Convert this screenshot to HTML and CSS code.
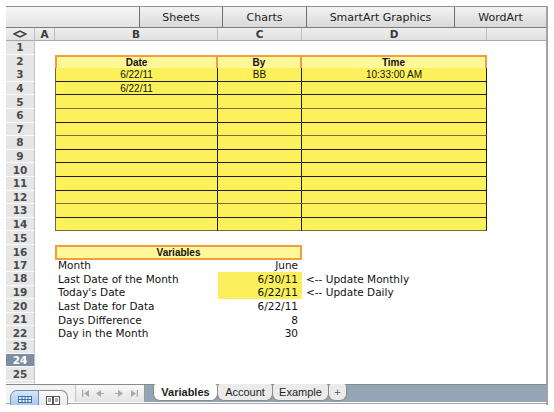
FILE: index.html
```html
<!DOCTYPE html>
<html lang="en">
<head>
    <meta charset="UTF-8">
    <title>Workbook - Variables</title>
    <link rel="stylesheet" href="styles.css">
</head>
<body>
    <div class="window">
        <div class="toolbar">
            <div class="tb-blank"></div>
            <div class="tb-btn sheets">Sheets</div>
            <div class="tb-btn charts">Charts</div>
            <div class="tb-btn smartart">SmartArt Graphics</div>
            <div class="tb-btn wordart">WordArt</div>
        </div>

        <div class="sheet">
            <div class="row colhead">
                <div class="corner">
                    <svg width="14" height="8" viewBox="0 0 14 8"><polygon points="1,4 7,1 13,4 7,7" fill="none" stroke="#3c3c3c" stroke-width="1.5"/></svg>
                </div>
                <div>A</div><div>B</div><div>C</div><div>D</div><div></div>
            </div>

            <div class="row"><div class="rh">1</div><div></div><div></div><div></div><div></div><div></div></div>
            <div class="row"><div class="rh">2</div><div></div><div class="hd first">Date</div><div class="hd">By</div><div class="hd">Time</div><div></div></div>
            <div class="row"><div class="rh">3</div><div></div><div class="y first">6/22/11</div><div class="y">BB</div><div class="y">10:33:00 AM</div><div></div></div>
            <div class="row"><div class="rh">4</div><div></div><div class="y first">6/22/11</div><div class="y"></div><div class="y"></div><div></div></div>
            <div class="row"><div class="rh">5</div><div></div><div class="y first olive"></div><div class="y olive"></div><div class="y olive"></div><div></div></div>
            <div class="row"><div class="rh">6</div><div></div><div class="y first"></div><div class="y"></div><div class="y"></div><div></div></div>
            <div class="row"><div class="rh">7</div><div></div><div class="y first olive"></div><div class="y olive"></div><div class="y olive"></div><div></div></div>
            <div class="row"><div class="rh">8</div><div></div><div class="y first"></div><div class="y"></div><div class="y"></div><div></div></div>
            <div class="row"><div class="rh">9</div><div></div><div class="y first"></div><div class="y"></div><div class="y"></div><div></div></div>
            <div class="row"><div class="rh">10</div><div></div><div class="y first"></div><div class="y"></div><div class="y"></div><div></div></div>
            <div class="row"><div class="rh">11</div><div></div><div class="y first"></div><div class="y"></div><div class="y"></div><div></div></div>
            <div class="row"><div class="rh">12</div><div></div><div class="y first olive"></div><div class="y olive"></div><div class="y olive"></div><div></div></div>
            <div class="row"><div class="rh">13</div><div></div><div class="y first"></div><div class="y"></div><div class="y"></div><div></div></div>
            <div class="row"><div class="rh">14</div><div></div><div class="y first olive"></div><div class="y olive"></div><div class="y olive"></div><div></div></div>
            <div class="row"><div class="rh">15</div><div></div><div></div><div></div><div></div><div></div></div>
            <div class="row"><div class="rh">16</div><div></div><div class="vh">Variables</div><div></div><div></div></div>
            <div class="row"><div class="rh">17</div><div></div><div class="lbl">Month</div><div class="val">June</div><div></div><div></div></div>
            <div class="row"><div class="rh">18</div><div></div><div class="lbl">Last Date of the Month</div><div class="val hl">6/30/11</div><div class="note">&lt;-- Update Monthly</div><div></div></div>
            <div class="row"><div class="rh">19</div><div></div><div class="lbl">Today's Date</div><div class="val hl">6/22/11</div><div class="note">&lt;-- Update Daily</div><div></div></div>
            <div class="row"><div class="rh">20</div><div></div><div class="lbl">Last Date for Data</div><div class="val">6/22/11</div><div></div><div></div></div>
            <div class="row"><div class="rh">21</div><div></div><div class="lbl">Days Difference</div><div class="val">8</div><div></div><div></div></div>
            <div class="row"><div class="rh">22</div><div></div><div class="lbl">Day in the Month</div><div class="val">30</div><div></div><div></div></div>
            <div class="row"><div class="rh">23</div><div></div><div></div><div></div><div></div><div></div></div>
            <div class="row"><div class="rh sel">24</div><div></div><div></div><div></div><div></div><div></div></div>
            <div class="row"><div class="rh">25</div><div></div><div></div><div></div><div></div><div></div></div>
            <div class="row cut"><div class="rh"></div><div></div><div></div><div></div><div></div><div></div></div>
        </div>

        <div class="tabbar">
            <div class="views">
                <span class="vbtn on">
                    <svg width="14" height="7" viewBox="0 0 14 7"><rect x="0.5" y="0.5" width="13" height="6" fill="#e8f1fb" stroke="#3d6fb0"/><path d="M4 0.5V6.5M7 0.5V6.5M10 0.5V6.5M0.5 3.5H13.5" stroke="#3d6fb0" stroke-width="1"/></svg>
                </span>
                <span class="vbtn">
                    <svg width="14" height="9" viewBox="0 0 14 9"><rect x="0.5" y="0.5" width="6" height="8" fill="#fff" stroke="#555"/><rect x="7.5" y="0.5" width="6" height="8" fill="#fff" stroke="#555"/><path d="M2 3H5M2 5H5M9 3H12M9 5H12" stroke="#555"/></svg>
                </span>
            </div>
            <div class="nav">
                <svg width="56" height="9" viewBox="0 0 56 9">
                    <g fill="#a9a9a9">
                        <rect x="0" y="1" width="1.3" height="7"/>
                        <polygon points="7,1 2,4.5 7,8"/>
                        <polygon points="19,1 14,4.5 19,8"/>
                        <rect x="19" y="4" width="3" height="1"/>
                        <polygon points="36,1 41,4.5 36,8"/>
                        <rect x="33" y="4" width="3" height="1"/>
                        <polygon points="49,1 54,4.5 49,8"/>
                        <rect x="54.7" y="1" width="1.3" height="7"/>
                    </g>
                </svg>
            </div>
            <div class="tabs">
                <span class="tab on">Variables</span>
                <span class="tab acct">Account</span>
                <span class="tab exmp">Example</span>
                <span class="tab plus">+</span>
            </div>
        </div>
        <div class="foot"></div>
    </div>
</body>
</html>
```

FILE: styles.css
```css
body {
    margin: 0;
    background: #fff;
    font-family: "DejaVu Sans", "Liberation Sans", sans-serif;
    color: #111;
}
.window {
    margin: 6px 0 0 6px;
    width: 540px;
    border-right: 2px solid #a3a3a3;
    padding-bottom: 1px;
}

/* ribbon-ish toolbar */
.toolbar {
    display: flex;
    height: 22px;
    box-sizing: border-box;
    border-top: 1px solid #8f8f8f;
    border-bottom: 1px solid #7c7c7c;
}
.tb-blank {
    width: 133px;
    background: linear-gradient(#f6f6f6, #e4e4e4);
}
.tb-btn {
    display: flex;
    align-items: center;
    justify-content: center;
    box-sizing: border-box;
    border-left: 1px solid #6f6f6f;
    background: linear-gradient(#f3f3f3, #d9d9d9);
    font-size: 11px;
    color: #222;
}
.sheets { width: 83px; }
.charts { width: 84px; }
.smartart { width: 148px; }
.wordart { width: 92px; }

/* grid */
.row {
    display: grid;
    grid-template-columns: 29px 20px 163px 84px 185px 59px;
    height: 13.6px;
}
.row > div {
    display: flex;
    align-items: center;
    box-sizing: border-box;
    white-space: nowrap;
    min-width: 0;
}
.colhead {
    height: 13px;
}
.colhead > div {
    justify-content: center;
    background: linear-gradient(#eeeeee, #e1e1e1);
    border-right: 1px solid #bdbdbd;
    border-bottom: 1px solid #a8a8a8;
    font-size: 10.5px;
    font-weight: bold;
    color: #3a3a3a;
}
.colhead > div:last-child {
    border-right: none;
}
.rh {
    justify-content: center;
    background: #e6e6e6;
    border-bottom: 1px solid #fbfbfb;
    border-right: 1px solid #c2c2c2;
    font-size: 10.5px;
    font-weight: bold;
    color: #4a4a4a;
}
.rh.sel {
    background: #7e8ea2;
    color: #fff;
}
.row.cut {
    height: 3px;
    overflow: hidden;
}

/* yellow log table */
.hd, .y {
    justify-content: center;
    font-family: "Liberation Sans", Arial, sans-serif;
    font-size: 10px;
    color: #111;
}
.hd {
    background: #fef898;
    border-top: 2px solid #f49d3d;
    border-right: 2px solid #f49d3d;
    border-bottom: 1px solid #1e1e1e;
    font-weight: bold;
}
.hd.first {
    border-left: 2px solid #f49d3d;
}
.y {
    background: #fcf15a;
    border-right: 1px solid #1e1e1e;
    border-bottom: 1px solid #1e1e1e;
}
.y.first {
    border-left: 1px solid #6c6a45;
}
.y.olive {
    border-bottom-color: #77703a;
}

/* variables block */
.vh {
    grid-column: span 2;
    justify-content: center;
    background: #fef898;
    border: 2px solid #f49d3d;
    font-family: "Liberation Sans", Arial, sans-serif;
    font-size: 10px;
    font-weight: bold;
}
.lbl, .val, .note {
    font-size: 10.5px;
}
.lbl {
    padding-left: 3px;
}
.val {
    justify-content: flex-end;
    padding-right: 4px;
}
.val.hl {
    background: #fbf05c;
}
.note {
    padding-left: 4px;
}

/* sheet tabs */
.tabbar {
    display: flex;
    height: 18px;
    box-sizing: border-box;
    border-top: 1px solid #8a8a8a;
}
.views {
    display: flex;
    width: 69px;
    padding: 5px 0 0 4px;
    box-sizing: border-box;
    background: #f2f2f2;
}
.vbtn {
    display: flex;
    justify-content: center;
    flex-shrink: 0;
    width: 29px;
    height: 22px;
    padding-top: 5px;
    box-sizing: border-box;
    border: 1px solid #8d8d8d;
    background: linear-gradient(#fbfbfb, #e2e2e2);
    position: relative;
    z-index: 1;
}
.vbtn.on {
    border-radius: 7px 0 0 7px;
    border-color: #6f8fb8;
    background: linear-gradient(#d5e6f8, #99bde6);
}
.vbtn:last-child {
    border-left: none;
    border-radius: 0 7px 7px 0;
}
.nav {
    display: flex;
    align-items: center;
    justify-content: center;
    width: 70px;
    box-sizing: border-box;
    border-left: 1px solid #c4c4c4;
    border-right: 1px solid #9b9b9b;
    background: linear-gradient(#f8f8f8, #e3e3e3);
}
.tabs {
    flex: 1;
    display: flex;
    padding-left: 8px;
    background: #95a4b6;
}
.tab {
    display: flex;
    align-items: center;
    justify-content: center;
    height: 17px;
    box-sizing: border-box;
    margin-top: -1px;
    margin-right: -1px;
    border: 1px solid #8c8c8c;
    border-top: none;
    border-radius: 3px 3px 7px 7px;
    background: #ebebeb;
    font-family: "Liberation Sans", Arial, sans-serif;
    font-size: 11px;
    color: #1e1e1e;
}
.tab.on {
    width: 65px;
    background: #fff;
    font-weight: bold;
    position: relative;
    z-index: 1;
}
.acct { width: 56px; }
.exmp { width: 57px; }
.plus {
    width: 19px;
    color: #666;
}
.foot {
    height: 1px;
    margin-top: 1px;
    background: #a9a9a9;
}
```
